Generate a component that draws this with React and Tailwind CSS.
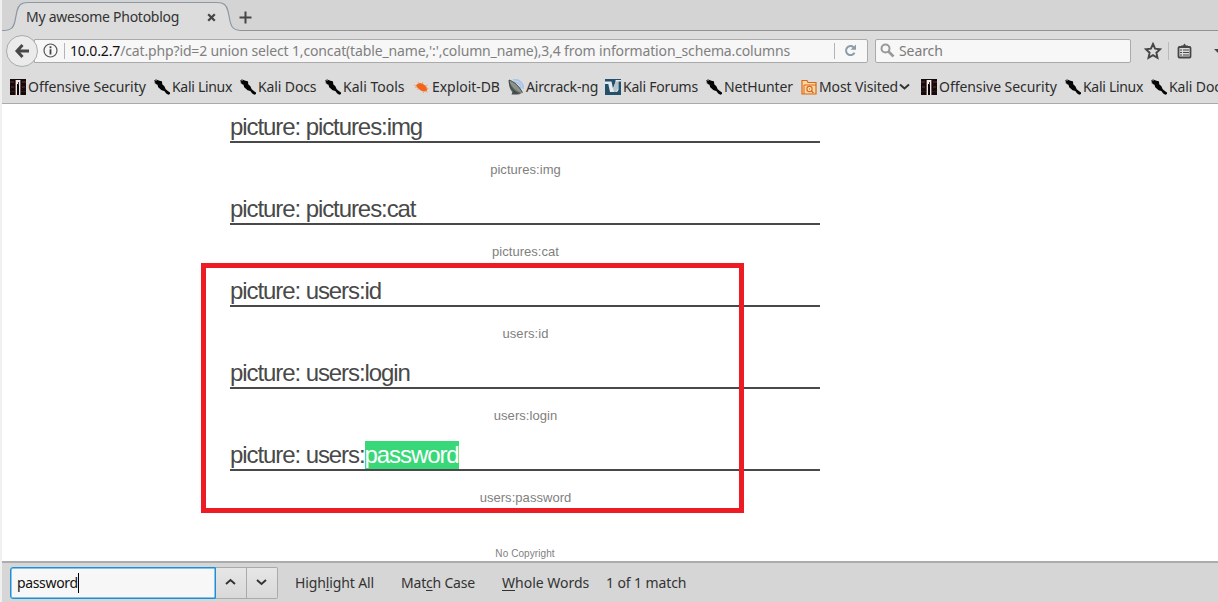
import React from "react";

const UI = "font-['Noto_Sans','Open_Sans',sans-serif]";

function OffsecIcon() {
  return (
    <svg width="16" height="16" viewBox="0 0 16 16" className="shrink-0" shapeRendering="crispEdges">
      <rect width="16" height="16" fill="#160b0c" />
      <path d="M0 2h4v2H0zM12 2h4v2h-4zM1 7h3v2H1zM12 7h3v2h-3z" fill="#3d1d1f" />
      <path d="M0 12h5v1H0zM11 12h5v1h-5z" fill="#351719" />
      <path d="M5 1h1v15H5zM10 1h1v15h-1z" fill="#6f5a58" />
      <path d="M6 1h4v15H6z" fill="#f0e9e6" />
      <path d="M7 5h2v11H7z" fill="#090405" />
      <path d="M8 3h1v3H8z" fill="#3a3030" />
    </svg>
  );
}

function KaliIcon() {
  return (
    <svg width="16" height="16" viewBox="0 0 16 16" className="shrink-0">
      <path d="M.2 1 2.800 1.800 2.200.4 5.400 1.800 7.800 2.300 8.300 4.200 8 5 10.400 7.200 11.700 10.200 14.200 12.300 16 13.400V15L14.400 15.800 12.200 14.500 10.300 11.900 7.600 11.200 4.200 8.300 3.500 5.800 1.600 5 1 3.400z" fill="#050505" />
      <path d="m0 3.500 2 1M1 .2l2 .8" stroke="#666" strokeWidth=".6" />
    </svg>
  );
}

function ExploitIcon() {
  return (
    <svg width="16" height="16" viewBox="0 0 16 16" className="shrink-0">
      <path d="M2 6.200 3.800 4.800 5.800 4 8.300 4.600 10.500 6 12.400 7.800 13.200 10.200 12.500 12.200 10 12.600 6.800 11.500 4.200 9.600 2.800 7.800z" fill="#f26419" />
      <path d="M1.800 6.800.2 6M5 5l-1-2M8 5l1-2M11 7l2.500-1M12 9l2.500.5M12 11.500l1.500 2M9 12l.4 2M5 9.500l-2 .8M3 8l-2 .3" stroke="#f39a65" strokeWidth=".9" fill="none" />
    </svg>
  );
}

function AircrackIcon() {
  return (
    <svg width="16" height="16" viewBox="0 0 16 16" className="shrink-0">
      <path d="M5 .8C11 0 15.500 4 15.500 10M6 3.300c4-.5 7 2 7 6" stroke="#a9c4ed" strokeWidth="1.800" fill="none" />
      <path d="M1 1c5 1.400 10 6 13.500 12.600L11 15.500l-5-1C2 12 .5 6.500 1 1z" fill="#5a615c" />
      <path d="M1 1c1 5 5 10 12 13l1.500-.4C11 7 6 2.400 1 1z" fill="#8a928a" />
      <path d="m5 12-1.500 3.400L10 15.500z" fill="#454c49" />
      <path d="M1 1c5 1.500 10 6 13.500 12.600M1 1c0 6 3 11 9 13.600" stroke="#343d3b" strokeWidth=".8" fill="none" />
    </svg>
  );
}

function ForumsIcon() {
  return (
    <svg width="16" height="16" viewBox="0 0 16 16" className="shrink-0">
      <rect width="16" height="16" fill="#24506b" />
      <path d="M0 2.500h6.500L8 9.500 10.500 3V1H16v1.500h-2.500V11L12 13H5L3.300 5H0z" fill="#e4eaed" />
      <path d="M10.500 3 8 9.500l1 3.500h2l2-3.500V2z" fill="#b4c3cc" />
    </svg>
  );
}

function FolderIcon() {
  return (
    <svg width="16" height="16" viewBox="0 0 16 16" className="shrink-0" fill="none">
      <path d="M1 15V1.500h5l1 2h8V15z" fill="#fbd7ae" stroke="#d9690f" strokeWidth="1.200" />
      <path d="M3 15V6h12" stroke="#d9690f" />
      <circle cx="8.500" cy="10" r="2.600" fill="#fff2df" stroke="#d9690f" strokeWidth="1.200" />
      <circle cx="8.500" cy="10" r=".8" fill="#d9690f" />
      <path d="m10.500 12 2 2" stroke="#d9690f" strokeWidth="1.300" />
    </svg>
  );
}

const icons = {
  offsec: OffsecIcon,
  kali: KaliIcon,
  exploit: ExploitIcon,
  aircrack: AircrackIcon,
  forums: ForumsIcon,
  folder: FolderIcon,
};

const bookmarks = [
  { icon: "offsec", label: "Offensive Security", width: "w-[144px]", track: "tracking-[-0.05px]" },
  { icon: "kali", label: "Kali Linux", width: "w-[86px]", track: "tracking-[-0.3px]" },
  { icon: "kali", label: "Kali Docs", width: "w-[85px]", track: "tracking-[-0.12px]" },
  { icon: "kali", label: "Kali Tools", width: "w-[89px]", track: "tracking-[0px]" },
  { icon: "exploit", label: "Exploit-DB", width: "w-[94px]", track: "tracking-[-0.05px]" },
  { icon: "aircrack", label: "Aircrack-ng", width: "w-[97px]", track: "tracking-[-0.18px]" },
  { icon: "forums", label: "Kali Forums", width: "w-[101px]", track: "tracking-[-0.22px]" },
  { icon: "kali", label: "NetHunter", width: "w-[95px]", track: "tracking-[-0.12px]" },
  { icon: "folder", label: "Most Visited", width: "w-[120px]", track: "tracking-[-0.12px]", menu: true },
  { icon: "offsec", label: "Offensive Security", width: "w-[144px]", track: "tracking-[-0.05px]" },
  { icon: "kali", label: "Kali Linux", width: "w-[86px]", track: "tracking-[-0.3px]" },
  { icon: "kali", label: "Kali Docs", width: "w-[86px]", track: "tracking-[-0.12px]" },
];

function Bookmark({ icon, label, width, track, menu }) {
  const Icon = icons[icon];
  return (
    <div className={`flex shrink-0 items-center gap-[2px] ${width}`}>
      <Icon />
      <span className={`whitespace-nowrap ${track}`}>{label}</span>
      {menu && (
        <svg width="11" height="8" viewBox="0 0 11 8" className="-ml-px shrink-0">
          <path d="m1 1.500 4.500 4 4.500-4" fill="none" stroke="#333" strokeWidth="2" />
        </svg>
      )}
    </div>
  );
}

function TabStrip() {
  return (
    <div className="relative flex h-[31px] shrink-0 items-center bg-[#d4d4d4] text-[#333]">
      <svg width="1216" height="31" viewBox="2 0 1216 31" className="absolute inset-0">
        <path d="M2 30.500C11 30.500 13.500 28 15 21L17 11C18.500 5 21 2.500 28 2.500H217C224 2.500 226.500 5 228 11L230 21C231.500 28 234 30.500 243 30.500V31H2z" fill="#dcdcdc" />
        <path d="M2 30.500C11 30.500 13.500 28 15 21L17 11C18.500 5 21 2.500 28 2.500H217C224 2.500 226.500 5 228 11L230 21C231.500 28 234 30.500 243 30.500" fill="none" stroke="#8b98a4" strokeWidth="1.200" />
        <path d="M241 30.500H1218" stroke="#929292" />
      </svg>
      <div className="relative flex items-center pt-[3px] pl-6">
        <span className="w-[181px] whitespace-nowrap text-[14px] leading-5 tracking-[-0.27px]">My awesome Photoblog</span>
        <svg width="9" height="9" viewBox="0 0 9 9">
          <path d="m1.200 1.200 6.600 6.600m0-6.600L1.200 7.800" stroke="#444" strokeWidth="2.200" />
        </svg>
        <svg width="13" height="13" viewBox="0 0 13 13" className="ml-[23px]">
          <path d="M6.500.5v12M.5 6.500h12" stroke="#454545" strokeWidth="2" />
        </svg>
      </div>
    </div>
  );
}

function NavBar() {
  return (
    <div className="flex h-[39px] shrink-0 items-center pl-1">
      <div className="z-10 flex size-8 shrink-0 items-center justify-center rounded-full border border-[#aaa] bg-[#ebebeb]">
        <svg width="16" height="16" viewBox="0 0 16 16">
          <path d="M8.500 2 3 8l5.500 6M3.500 8H15" fill="none" stroke="#484848" strokeWidth="3" />
        </svg>
      </div>
      <div className="-ml-1 flex h-6 w-[834px] shrink-0 items-center rounded-r-[2px] border border-[#aaa] bg-[#f7f7f7] pl-2">
        <svg width="15" height="15" viewBox="0 0 15 15" className="shrink-0">
          <circle cx="7.500" cy="7.500" r="6.500" fill="none" stroke="#555" strokeWidth="1.200" />
          <path d="M7.500 3.300v2M7.500 6.300V11.500" stroke="#444" strokeWidth="1.800" />
        </svg>
        <span className="ml-1.5 h-4 w-px shrink-0 bg-[#b4b4b4]" />
        <span className="ml-[5px] w-[764px] shrink-0 whitespace-nowrap text-[14px] leading-5 tracking-[-0.142px] text-[#808080]">
          <span className="text-[#111]">10.0.2.7</span>
          /cat.php?id=2 union select 1,concat(table_name,':',column_name),3,4 from information_schema.columns
        </span>
        <span className="h-4 w-px shrink-0 bg-[#b4b4b4]" />
        <svg width="13" height="13" viewBox="0 0 13 13" className="ml-[9px] shrink-0">
          <path d="M9.500 3.200A4.500 4.500 0 1 0 10.500 8.700" fill="none" stroke="#8b9cab" strokeWidth="2" />
          <path d="M6.500 5.800H12V.5z" fill="#8b9cab" />
        </svg>
      </div>
      <div className="ml-[7px] flex h-6 w-[256px] shrink-0 items-center rounded-[2px] border border-[#aaa] bg-[#f7f7f7] pl-1">
        <svg width="15" height="15" viewBox="0 0 15 15">
          <circle cx="5.500" cy="5.500" r="4" fill="none" stroke="#999" strokeWidth="2" />
          <path d="m8.500 8.500 5 5" stroke="#999" strokeWidth="2.600" />
        </svg>
        <span className="ml-1 text-[14px] leading-5 tracking-[-0.1px] text-[#7b7b7b]">Search</span>
      </div>
      <svg width="18" height="18" viewBox="0 0 18 18" className="ml-[13px] shrink-0">
        <path d="m9 2 2.100 4.700 5.100.5-3.800 3.500 1.100 5.100L9 13.200l-4.500 2.600 1.100-5.100L1.800 7.200l5.100-.5z" fill="none" stroke="#464646" strokeWidth="1.900" />
      </svg>
      <span className="ml-[6px] h-[18px] w-px shrink-0 bg-[#bbb]" />
      <svg width="15" height="16" viewBox="0 0 15 16" className="ml-2 shrink-0">
        <path d="M4 4V2.500h2L7.500.5 9 2.500h2V4z" fill="#464646" />
        <rect x="1.500" y="4" width="12" height="10.500" rx="1" fill="none" stroke="#464646" strokeWidth="1.800" />
        <path d="M3 7h2m1 0h6M3 9.500h2m1 0h6M3 12h2m1 0h6" stroke="#464646" strokeWidth="1.200" />
      </svg>
      <svg width="10" height="6" viewBox="0 0 10 6" className="ml-[22px] shrink-0">
        <path d="M0 1h10L5 6z" fill="#464646" />
      </svg>
    </div>
  );
}

function Picture({ name, match }) {
  return (
    <article className="h-[82px]">
      <h2 className="h-[30px] border-b-2 border-[#494949] text-[24px] leading-[28px] tracking-[-1.08px] whitespace-nowrap text-[#494949]">
        picture: {name}
        {match && <mark className="inline-block h-7 bg-[#38d878] text-white">{match}</mark>}
      </h2>
      <p className="mt-[17px] pl-px text-center text-[13px] leading-5 tracking-[0.05px] text-[#808080]">{name}{match}</p>
    </article>
  );
}

function FindBar() {
  return (
    <div className="flex h-[41px] shrink-0 items-center border-t-2 border-[#acacac] bg-[#d6d6d6] pt-px pl-2 text-[14px] leading-5 text-[#333]">
      <div className="flex h-8 w-[206px] shrink-0 items-center rounded-l-[3px] border border-[#1a90d8] bg-[#f7f7f7] pl-1.5 text-[#111] shadow-[inset_0_0_0_0.5px_#1a90d8]">
        <span className="tracking-[-0.35px]">password</span>
        <span className="h-5 w-px bg-black" />
      </div>
      <div className="flex h-8 w-[31px] shrink-0 items-center justify-center border-y border-r border-[#aaa] bg-linear-to-b from-[#e6e6e6] to-[#d9d9d9]">
        <svg width="11" height="7" viewBox="0 0 11 7" className="mr-px mb-[3px]"><path d="m1 6 4.500-4L10 6" fill="none" stroke="#333" strokeWidth="1.900" /></svg>
      </div>
      <div className="flex h-8 w-[31px] shrink-0 items-center justify-center rounded-r-[2px] border-y border-r border-[#aaa] bg-linear-to-b from-[#e6e6e6] to-[#d9d9d9]">
        <svg width="11" height="7" viewBox="0 0 11 7" className="mr-px mb-[2px]"><path d="m1 1 4.500 4L10 1" fill="none" stroke="#333" strokeWidth="1.900" /></svg>
      </div>
      <span className="ml-[17px] w-[106px] tracking-[-0.13px] whitespace-nowrap">High<u className="underline-offset-2">l</u>ight All</span>
      <span className="w-[101px] tracking-[-0.2px] whitespace-nowrap">Mat<u className="underline-offset-2">c</u>h Case</span>
      <span className="w-[104px] whitespace-nowrap"><u className="underline-offset-2">W</u>hole Words</span>
      <span className="tracking-[-0.1px] whitespace-nowrap">1 of 1 match</span>
    </div>
  );
}

export default function App() {
  return (
    <div className={`relative flex h-[602px] w-[1218px] flex-col overflow-hidden bg-[#dcdcdc] pl-0.5 ${UI}`}>
      <span className="absolute inset-y-0 left-0 w-0.5 bg-[#f0f0f0]" />
      <TabStrip />
      <NavBar />
      <nav className="flex h-[34px] shrink-0 overflow-hidden border-b border-[#aaa] pl-2 text-[14px] leading-5 text-[#2d2d2d]">
        {bookmarks.map((b, i) => <Bookmark key={i} {...b} />)}
      </nav>
      <main className="h-[457px] shrink-0 overflow-hidden bg-white pt-[9px] pl-[228px] font-['Liberation_Sans',Arial,sans-serif]">
        <div className="w-[590px]">
          <Picture name="pictures:img" />
          <Picture name="pictures:cat" />
          <Picture name="users:id" />
          <Picture name="users:login" />
          <Picture name="users:" match="password" />
          <footer className="pt-[25px] text-center text-[10px] leading-[12px] tracking-[0.08px] text-[#808080]">No Copyright</footer>
        </div>
      </main>
      <FindBar />
      <div className="absolute top-[263px] left-[201px] h-[250px] w-[543px] border-5 border-[#ed1c24]" />
    </div>
  );
}
